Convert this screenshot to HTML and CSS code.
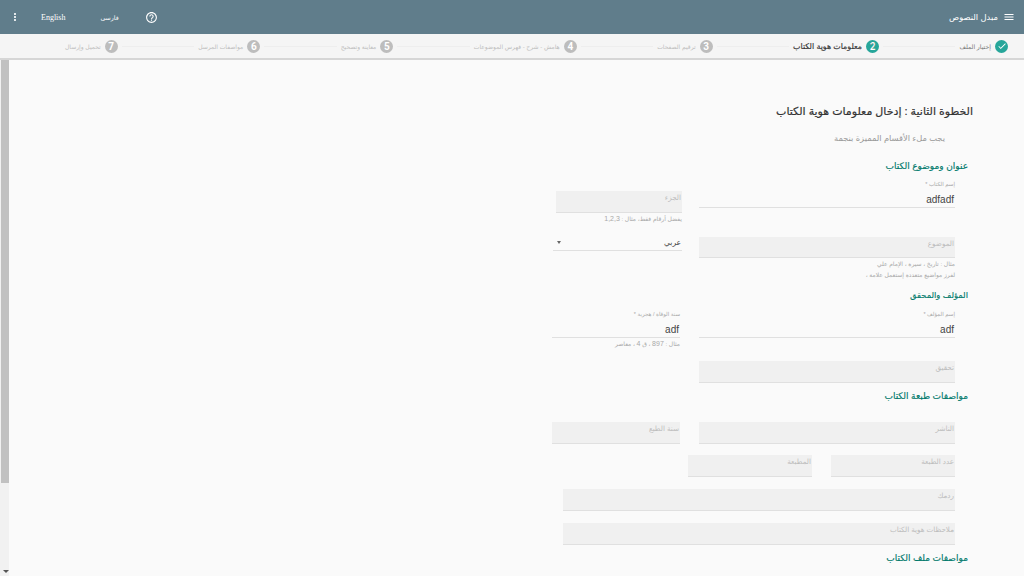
FILE: index.html
```html
<!DOCTYPE html>
<html lang="ar" dir="rtl">
<head>
<meta charset="utf-8">
<title>مبدل النصوص</title>
<link rel="stylesheet" href="styles.css">
</head>
<body>
<div class="app">
  <header class="topbar">
    <div class="brand">
      <svg class="menu-icon" viewBox="0 0 24 24"><path d="M3 18h18v-2H3v2zm0-5h18v-2H3v2zm0-7v2h18V6H3z"/></svg>
      <span>مبدل النصوص</span>
    </div>
    <div class="actions">
      <svg class="more-icon" viewBox="0 0 24 24"><path d="M12 8c1.1 0 2-.9 2-2s-.9-2-2-2-2 .9-2 2 .9 2 2 2zm0 2c-1.1 0-2 .9-2 2s.9 2 2 2 2-.9 2-2-.9-2-2-2zm0 6c-1.1 0-2 .9-2 2s.9 2 2 2 2-.9 2-2-.9-2-2-2z"/></svg>
      <span class="lang-en">English</span>
      <span class="lang-fa">فارسى</span>
      <svg class="help-icon" viewBox="0 0 24 24"><path d="M11 18h2v-2h-2v2zm1-16C6.48 2 2 6.48 2 12s4.48 10 10 10 10-4.48 10-10S17.52 2 12 2zm0 18c-4.41 0-8-3.59-8-8s3.59-8 8-8 8 3.59 8 8-3.59 8-8 8zm0-14c-2.21 0-4 1.79-4 4h2c0-1.1.9-2 2-2s2 .9 2 2c0 2-3 1.75-3 5h2c0-2.25 3-2.5 3-5 0-2.21-1.79-4-4-4z"/></svg>
    </div>
  </header>

  <nav class="stepper">
    <div class="step done">
      <span class="badge"><svg viewBox="0 0 24 24"><path d="M9 16.2 4.8 12l-1.4 1.4L9 19 21 7l-1.4-1.4z"/></svg></span>
      <span class="step-label">إختيار الملف</span>
    </div>
    <i class="link"></i>
    <div class="step active"><span class="badge">2</span><span class="step-label">معلومات هوية الكتاب</span></div>
    <i class="link"></i>
    <div class="step"><span class="badge">3</span><span class="step-label">ترقيم الصفحات</span></div>
    <i class="link"></i>
    <div class="step"><span class="badge">4</span><span class="step-label">هامش - شرح - فهرس الموضوعات</span></div>
    <i class="link"></i>
    <div class="step"><span class="badge">5</span><span class="step-label">معاينة وتصحيح</span></div>
    <i class="link"></i>
    <div class="step"><span class="badge">6</span><span class="step-label">مواصفات المرسل</span></div>
    <i class="link"></i>
    <div class="step"><span class="badge">7</span><span class="step-label">تحميل وإرسال</span></div>
  </nav>

  <main class="body">
    <form class="form">
      <h1 class="title">الخطوة الثانية : إدخال معلومات هوية الكتاب</h1>
      <p class="hint">يجب ملء الأقسام المميزة بنجمة</p>

      <h2 class="section s1">عنوان وموضوع الكتاب</h2>
      <div class="row r1">
        <div class="col c256">
          <div class="line">
            <div class="label">إسم الكتاب *</div>
            <div class="value">adfadf</div>
          </div>
        </div>
        <div class="col c126 push11">
          <div class="fill">الجزء</div>
          <div class="help">يفضل أرقام فقط، مثال : <span class="num">1,2,3</span></div>
        </div>
      </div>

      <div class="row r2">
        <div class="col c256">
          <div class="fill short">الموضوع</div>
          <div class="help first">مثال : تاريخ ، سيرة ، الإمام علي</div>
          <div class="help">لفرز مواضيع متعددة إستعمل علامة ،</div>
        </div>
        <div class="col c129">
          <div class="select">
            <span>عربي</span>
            <i class="caret"></i>
          </div>
        </div>
      </div>

      <h2 class="section s2">المؤلف والمحقق</h2>
      <div class="row r3">
        <div class="col c256">
          <div class="line">
            <div class="label">إسم المؤلف *</div>
            <div class="value">adf</div>
          </div>
        </div>
        <div class="col c128 gap19">
          <div class="line">
            <div class="label">سنة الوفاة / هجرية *</div>
            <div class="value">adf</div>
          </div>
          <div class="help">مثال : <span class="num">897</span> ، ق <span class="num">4</span> ، معاصر</div>
        </div>
      </div>

      <div class="row">
        <div class="col c256"><div class="fill">تحقيق</div></div>
      </div>

      <h2 class="section s3">مواصفات طبعة الكتاب</h2>
      <div class="row r5">
        <div class="col c256"><div class="fill">الناشر</div></div>
        <div class="col c128 gap19"><div class="fill">سنة الطبع</div></div>
      </div>
      <div class="row r6">
        <div class="col c124"><div class="fill">عدد الطبعة</div></div>
        <div class="col c124 gap19"><div class="fill">المطبعة</div></div>
      </div>
      <div class="row r7">
        <div class="col c392"><div class="fill">ردمك</div></div>
      </div>
      <div class="row r7">
        <div class="col c392"><div class="fill">ملاحظات هوية الكتاب</div></div>
      </div>
      <h2 class="section s3">مواصفات ملف الكتاب</h2>
    </form>
    <div class="scrollbar"><div class="thumb"></div><i class="arrow"></i></div>
  </main>
</div>
</body>
</html>
```
FILE: styles.css
```css
* { box-sizing: border-box; }
html, body { margin: 0; height: 100%; overflow: hidden; }
body { font-family: "Liberation Sans", "DejaVu Sans", sans-serif; background: #fafafa; color: #333; }
.app { width: 1024px; height: 576px; display: flex; flex-direction: column; overflow: hidden; }

.topbar { height: 34px; flex: none; background: #607d8b; color: #fff; display: flex; justify-content: space-between; align-items: center; }
.brand { display: flex; align-items: center; gap: 5px; padding-right: 9px; font-size: 8.4px; }
.menu-icon { width: 12px; height: 12px; fill: #fff; }
.actions { direction: ltr; display: flex; align-items: center; padding-left: 9px; font-size: 6.2px; }
.more-icon { width: 12px; height: 12px; fill: #fff; }
.lang-en { margin-left: 20px; font-family: "Liberation Serif", serif; font-size: 8px; }
.lang-fa { margin-left: 35px; }
.help-icon { width: 13px; height: 13px; fill: #fff; margin-left: 26px; }

.stepper { height: 26px; flex: none; background: #f5f5f5; border-bottom: 2px solid #d6d6d6; display: flex; align-items: center; padding: 0 16px 0 65px; }
.step { display: flex; align-items: center; gap: 4px; flex: none; font-size: 6px; color: #bdbdbd; }
.badge { width: 13px; height: 13px; border-radius: 50%; background: #bdbdbd; color: #fff; font-size: 10px; font-weight: 700; font-family: Roboto, sans-serif; display: flex; align-items: center; justify-content: center; }
.badge svg { width: 10px; height: 10px; fill: #fff; }
.step.done .badge, .step.active .badge { background: #26a69a; }
.step.done { color: #777; font-size: 6.2px; }
.step.active { color: #333; font-size: 7.9px; -webkit-text-stroke: 0.15px #333; }
.link { flex: 1; height: 1px; background: #eeeeee; margin: 0 4px; }

.body { flex: 1; min-height: 0; display: flex; justify-content: space-between; }
.form { padding: 41px 51px 0 0; width: 560px; }
.title { margin: 0; font-size: 11px; line-height: 20px; font-weight: 400; color: #333; -webkit-text-stroke: 0.2px #333; }
.hint { margin: 11px 28px 0 0; font-size: 8.3px; line-height: 12px; color: #999; }
.section { margin: 0 5px 0 0; font-size: 9px; line-height: 16px; font-weight: 400; color: #00796b; -webkit-text-stroke: 0.15px #00796b; }
.s1 { margin-top: 14px; }
.s2 { margin-top: 7px; font-size: 8.4px; }
.s3 { margin-top: 5px; }

.row { display: flex; margin-right: 18px; align-items: flex-start; }
.r1 { margin-top: 6px; height: 57px; gap: 17px; }
.r2 { height: 43px; gap: 17px; }
.r3 { margin-top: 7px; height: 51px; }
.r5 { margin-top: 18px; }
.r6 { margin-top: 11px; }
.r7 { margin-top: 12px; }

.col { flex: none; }
.c256 { width: 256px; }
.c124 { width: 124px; }
.c126 { width: 126px; }
.c128 { width: 128px; }
.c129 { width: 129px; }
.c392 { width: 392px; }
.push11 { margin-top: 11px; }
.gap19 { margin-right: 19px; }

.line { height: 28px; border-bottom: 1px solid #e0e0e0; }
.label { font-size: 5.5px; line-height: 8px; color: #a8a8a8; }
.value { font-size: 10px; line-height: 14px; margin-top: 5px; color: #444; padding-right: 1px; }
.fill { height: 22px; background: #f0f0f0; border-bottom: 1px solid #e0e0e0; font-size: 7.2px; line-height: 12px; padding: 1px; color: #bdbdbd; }
.fill.short { height: 21px; }
.help { font-size: 6px; line-height: 11px; color: #a8a8a8; }
.help.first { margin-top: 1px; }
.num { font-size: 7px; }

.select { height: 14px; border-bottom: 1px solid #e0e0e0; display: flex; justify-content: space-between; align-items: center; font-size: 7.5px; line-height: 12px; color: #444; padding: 0 1px 2px 20px; }
.caret { width: 0; height: 0; border-left: 2.5px solid transparent; border-right: 2.5px solid transparent; border-top: 3px solid #666; margin-left: -16px; }

.scrollbar { width: 9px; flex: none; background: #f1f1f1; display: flex; flex-direction: column; justify-content: space-between; }
.thumb { width: 8px; height: 423px; background: #c1c1c1; }
.arrow { width: 0; height: 0; border-left: 3px solid transparent; border-right: 3px solid transparent; border-top: 3px solid #555; margin: 0 0 3px 1px; }
```
